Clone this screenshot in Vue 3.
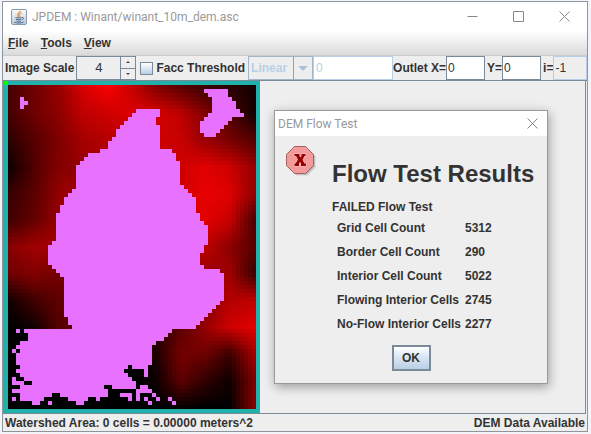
<script setup>
import { onMounted, ref } from 'vue'

const scale = ref('4')
const facc = ref(false)
const threshold = ref('0')
const outletX = ref('0')
const outletY = ref('0')
const outletI = ref('-1')

const stats = [
  ['Grid Cell Count', 5312],
  ['Border Cell Count', 290],
  ['Interior Cell Count', 5022],
  ['Flowing Interior Cells', 2745],
  ['No-Flow Interior Cells', 2277],
]

const COLS = 64
const ROWS = 83
const dem = ref(null)

// Coarse elevation samples, spread evenly over the grid and interpolated per cell.
const relief = [
  [70, 110, 150, 215, 250, 200, 130, 90, 60, 40, 20],
  [70, 110, 140, 190, 205, 220, 215, 190, 130, 80, 20],
  [45, 85, 125, 165, 180, 200, 205, 200, 155, 120, 85],
  [15, 80, 130, 150, 180, 200, 200, 205, 225, 205, 150],
  [55, 90, 145, 170, 180, 200, 200, 210, 232, 222, 150],
  [65, 100, 150, 170, 180, 200, 200, 210, 225, 200, 80],
  [135, 160, 165, 150, 150, 150, 150, 180, 190, 140, 90],
  [110, 130, 115, 110, 110, 110, 110, 130, 155, 160, 60],
  [20, 65, 95, 100, 100, 100, 100, 110, 130, 180, 190],
  [0, 15, 85, 100, 60, 30, 40, 90, 150, 205, 225],
  [0, 0, 0, 0, 0, 0, 30, 115, 110, 60, 160],
  [0, 0, 0, 0, 0, 0, 12, 95, 50, 15, 120],
  [0, 0, 0, 0, 0, 0, 0, 10, 0, 0, 130],
]

// Cells without flow: [first row, last row + 1, first column, last column + 1]
const noFlow = [
  [4, 7, 4, 5], [5, 6, 5, 6],
  [2, 3, 50, 56], [3, 4, 51, 56], [4, 5, 52, 57], [5, 7, 52, 58], [7, 8, 52, 59],
  [8, 9, 51, 60], [9, 10, 50, 57], [10, 11, 49, 56], [11, 12, 49, 55], [12, 13, 49, 54], [13, 14, 50, 53],
  [7, 8, 33, 39], [8, 9, 32, 39], [9, 10, 31, 38], [10, 11, 30, 38], [11, 12, 29, 39], [12, 14, 28, 39],
  [14, 15, 27, 39], [15, 17, 26, 39], [17, 18, 24, 42], [18, 19, 21, 43], [19, 20, 20, 43],
  [20, 21, 19, 44], [21, 26, 18, 44], [26, 27, 18, 45], [27, 28, 17, 46], [28, 29, 16, 47],
  [29, 31, 15, 48], [31, 33, 14, 48], [33, 35, 13, 49], [35, 36, 13, 50], [36, 40, 13, 51],
  [40, 41, 12, 51], [41, 43, 11, 50], [43, 46, 11, 49], [46, 47, 12, 50], [47, 48, 13, 54],
  [48, 49, 14, 55], [49, 55, 15, 55], [55, 56, 15, 54], [56, 57, 15, 53], [57, 58, 15, 52],
  [58, 59, 15, 51], [59, 60, 16, 50], [60, 61, 16, 49], [61, 62, 17, 48],
  [62, 63, 3, 4], [62, 63, 5, 42], [63, 64, 6, 41], [64, 65, 6, 40], [65, 66, 4, 38], [66, 67, 3, 37],
  [67, 68, 2, 3], [67, 68, 4, 37], [68, 71, 3, 37], [71, 72, 4, 31], [71, 72, 32, 36],
  [72, 73, 3, 30], [72, 74, 35, 36], [73, 74, 4, 31], [74, 75, 2, 3], [74, 75, 5, 32],
  [75, 76, 2, 5], [75, 76, 7, 33], [76, 77, 4, 25], [76, 77, 27, 33], [76, 77, 34, 36],
  [77, 78, 2, 26], [77, 78, 33, 37], [78, 79, 4, 12], [78, 79, 14, 26], [78, 79, 29, 32],
  [78, 80, 33, 34], [78, 79, 37, 38], [79, 80, 2, 3], [79, 80, 4, 10], [79, 80, 16, 21],
  [79, 80, 23, 24], [79, 80, 31, 32], [79, 80, 35, 36], [79, 80, 38, 39], [79, 80, 41, 42],
  [80, 81, 7, 9], [80, 81, 11, 12], [80, 81, 18, 20], [80, 81, 36, 37], [80, 81, 42, 43],
]

function intensity(col, row) {
  if (row >= 62 && col < 34) return 0
  const u = ((col - 1) / (COLS - 3)) * (relief[0].length - 1)
  const v = ((row - 1) / (ROWS - 3)) * (relief.length - 1)
  const c = Math.min(Math.floor(u), relief[0].length - 2)
  const r = Math.min(Math.floor(v), relief.length - 2)
  const fu = u - c
  const fv = v - r
  const top = relief[r][c] * (1 - fu) + relief[r][c + 1] * fu
  const bottom = relief[r + 1][c] * (1 - fu) + relief[r + 1][c + 1] * fu
  return Math.round(top * (1 - fv) + bottom * fv)
}

onMounted(() => {
  const ctx = dem.value.getContext('2d')
  ctx.fillStyle = '#20b2aa'
  ctx.fillRect(0, 0, COLS, ROWS)
  for (let row = 1; row < ROWS - 1; row++) {
    for (let col = 1; col < COLS - 1; col++) {
      ctx.fillStyle = `rgb(${intensity(col, row)}, 0, 0)`
      ctx.fillRect(col, row, 1, 1)
    }
  }
  ctx.fillStyle = '#e872ff'
  for (const [r0, r1, c0, c1] of noFlow) ctx.fillRect(c0, r0, c1 - c0, r1 - r0)
  ctx.fillStyle = '#00ff00'
  ctx.fillRect(0, 0, 1, 1)
})
</script>

<template>
  <div class="desktop">
    <main class="window">
      <header class="titlebar">
        <svg class="java" viewBox="0 0 16 16" aria-hidden="true">
          <defs>
            <linearGradient id="java-bg" x1="0" y1="0" x2="0" y2="1">
              <stop offset="0" stop-color="#fbfcfd" />
              <stop offset="1" stop-color="#b9c9d8" />
            </linearGradient>
          </defs>
          <rect x="0.5" y="0.5" width="15" height="15" rx="1.5" fill="url(#java-bg)" stroke="#8a9bad" />
          <path d="M9.2 1.8C9.8 3.6 5.8 4.4 6.8 6.2C7.1 6.8 7.5 7.3 7.6 8" fill="none" stroke="#e8862e" stroke-width="1.3" />
          <path d="M10.6 4.2C8.4 5 8 5.8 8.8 6.8C9.2 7.4 8.8 7.8 8.4 8.2" fill="none" stroke="#e8862e" stroke-width="1" />
          <path d="M4.4 8.8H10.6M5 10.6H10.2M10.8 8.6C13.4 8.2 13 10.2 10.8 10.8M5.6 12.2H9.8M3.4 13.2C5.4 14.4 10.6 14.2 12.6 13" fill="none" stroke="#4a6a92" stroke-width="1" />
        </svg>
        <h1 class="caption">JPDEM : Winant/winant_10m_dem.asc</h1>
        <div class="controls">
          <button type="button" aria-label="Minimize">
            <svg viewBox="0 0 11 11"><path d="M0.5 5.5H10.5" /></svg>
          </button>
          <button type="button" aria-label="Maximize">
            <svg viewBox="0 0 11 11"><path d="M0.5 0.5H10.5V10.5H0.5Z" /></svg>
          </button>
          <button type="button" aria-label="Close">
            <svg viewBox="0 0 11 11"><path d="M0.5 0.5L10.5 10.5M10.5 0.5L0.5 10.5" /></svg>
          </button>
        </div>
      </header>

      <nav class="menubar">
        <button type="button"><u>F</u>ile</button>
        <button type="button"><u>T</u>ools</button>
        <button type="button"><u>V</u>iew</button>
      </nav>

      <form class="toolbar" @submit.prevent>
        <label for="scale">Image Scale</label>
        <div class="spinner">
          <input id="scale" v-model="scale" type="text" />
          <div class="steps">
            <button type="button" aria-label="Increase"><svg viewBox="0 0 4 2"><path d="M0 2L2 0L4 2Z" /></svg></button>
            <button type="button" aria-label="Decrease"><svg viewBox="0 0 4 2"><path d="M0 0L2 2L4 0Z" /></svg></button>
          </div>
        </div>
        <input id="facc" v-model="facc" class="check" type="checkbox" />
        <label for="facc" class="facc">Facc Threshold</label>
        <div class="combo">
          <select aria-label="Threshold scale" disabled><option>Linear</option></select>
          <span class="arrow"><svg viewBox="0 0 10 5"><path d="M0 0H10L5 5Z" /></svg></span>
        </div>
        <input v-model="threshold" class="field threshold" type="text" aria-label="Threshold value" disabled />
        <label for="outx">Outlet X=</label>
        <input id="outx" v-model="outletX" class="field" type="text" />
        <label for="outy" class="next">Y=</label>
        <input id="outy" v-model="outletY" class="field" type="text" />
        <label for="outi" class="next">i=</label>
        <input id="outi" v-model="outletI" class="field index" type="text" readonly />
      </form>

      <section class="view">
        <canvas ref="dem" class="dem" :width="COLS" :height="ROWS"></canvas>
      </section>

      <footer class="status">
        <span>Watershed Area: 0 cells = 0.00000 meters^2</span>
        <span>DEM Data Available</span>
      </footer>
    </main>

    <section class="dialog" role="dialog" aria-labelledby="dialog-title">
      <header class="dialog-bar">
        <h2 id="dialog-title" class="caption">DEM Flow Test</h2>
        <button type="button" class="dialog-close" aria-label="Close">
          <svg viewBox="0 0 11 11"><path d="M0.5 0.5L10.5 10.5M10.5 0.5L0.5 10.5" /></svg>
        </button>
      </header>
      <div class="dialog-body">
        <svg class="error" viewBox="0 0 32 32" aria-hidden="true">
          <path d="M8.5 0.5H19.5L27.5 8.5V19.5L19.5 27.5H8.5L0.5 19.5V8.5Z" transform="translate(2 2)" fill="#000" opacity="0.12" />
          <path d="M8.5 0.5H19.5L27.5 8.5V19.5L19.5 27.5H8.5L0.5 19.5V8.5Z" transform="translate(1 1)" fill="#000" opacity="0.15" />
          <path d="M8.5 0.5H19.5L27.5 8.5V19.5L19.5 27.5H8.5L0.5 19.5V8.5Z" fill="#f39a9a" stroke="#a06060" />
          <path d="M8.5 8H13.5V10L14.5 11.4L15.5 10V8H19.5V10H18.5L16.5 13.7L18.5 17.5H20V20H15V17.5L14 15.8L13 17.5V20H8.5V17.5H9.5L12 13.8L10 10H8.5Z" fill="#960000" stroke="#ffd0d0" stroke-width="1" paint-order="stroke" />
        </svg>
        <div class="report">
          <h3>Flow Test Results</h3>
          <p>FAILED Flow Test</p>
          <table>
            <tbody>
              <tr v-for="[name, value] in stats" :key="name">
                <th scope="row">{{ name }}</th>
                <td>{{ value }}</td>
              </tr>
            </tbody>
          </table>
        </div>
      </div>
      <button type="button" class="ok">OK</button>
    </section>
  </div>
</template>

<style>
body {
  margin: 0;
  background: #f1f5fa;
}
</style>

<style scoped>
* {
  box-sizing: border-box;
}

.desktop {
  position: relative;
  display: flex;
  min-height: 100vh;
  padding: 1px 3px 2px 2px;
  font: bold 12px/16px "Liberation Sans", Arial, sans-serif;
  color: #333;
}

button,
input,
select {
  margin: 0;
  padding: 0;
  border: 0;
  border-radius: 0;
  background: none;
  font: inherit;
  color: inherit;
}

svg {
  display: block;
}

.window {
  flex: 1;
  min-width: 0;
  display: flex;
  flex-direction: column;
  border: 1px solid #8f959c;
  background: #eee;
}

.titlebar {
  display: flex;
  align-items: center;
  height: 29px;
  padding-left: 8px;
  background: #fff;
}

.java {
  width: 16px;
  height: 16px;
}

.caption {
  margin: 0;
  font: 12px/16px Roboto, "Open Sans", sans-serif;
  color: #999;
}

.titlebar .caption {
  flex: 1;
  padding-left: 5px;
}

.controls {
  display: flex;
}

.controls button {
  display: flex;
  justify-content: center;
  width: 46px;
}

.controls svg,
.dialog-close svg {
  width: 11px;
  height: 11px;
  fill: none;
  stroke: #888;
}

.menubar {
  display: flex;
  gap: 12px;
  height: 25px;
  padding: 0 5px;
  border-bottom: 1px solid #ccc;
  background: linear-gradient(#fff, #dadada);
}

.toolbar {
  display: flex;
  align-items: center;
  height: 25px;
  padding-left: 2px;
  border-bottom: 1px solid #7a8a99;
  white-space: nowrap;
}

.spinner {
  display: flex;
  width: 60px;
  height: 24px;
  margin-left: 2px;
}

.spinner input {
  flex: 1;
  min-width: 0;
  border: 1px solid #7a8a99;
  border-right: 0;
  text-align: center;
  font-weight: normal;
  font-size: 13px;
}

.steps {
  display: flex;
  flex-direction: column;
  width: 16px;
  border: 1px solid #7a8a99;
}

.steps button {
  flex: 1;
  display: flex;
  align-items: center;
  justify-content: center;
}

.steps button + button {
  border-top: 1px solid #7a8a99;
}

.steps svg {
  width: 4px;
  height: 2px;
  fill: #444;
}

.check {
  appearance: none;
  width: 13px;
  height: 13px;
  margin: 0 3px 0 4px;
  border: 1px solid #7a8a99;
  background: linear-gradient(#fff, #b8cfe5);
}

.facc {
  margin-right: 3px;
}

.combo {
  display: flex;
  width: 65px;
  height: 24px;
  border: 1px solid #a3b5c8;
}

.combo select {
  flex: 1;
  min-width: 0;
  appearance: none;
  padding-left: 2px;
  color: #b8cfe5;
  opacity: 1;
}

.arrow {
  display: flex;
  align-items: center;
  justify-content: center;
  width: 19px;
  border-left: 1px solid #8fa1b3;
}

.arrow svg {
  width: 10px;
  height: 5px;
  fill: #a9c3dd;
}

.field {
  width: 39px;
  height: 24px;
  padding-left: 1px;
  border: 1px solid #7a8a99;
  background: #fff;
  font-weight: normal;
}

.threshold {
  width: 80px;
  padding-left: 2px;
  border-color: #b8cfe5;
  color: #b8cfe5;
}

.next {
  margin-left: 2px;
}

.index {
  flex: 1;
  min-width: 0;
  border-color: #b8cfe5;
  background: #eee;
}

.view {
  flex: 1;
  display: flex;
  align-items: flex-start;
  margin-right: 1px;
  border-right: 1px solid #7a8a99;
  border-bottom: 1px solid #7a8a99;
  border-left: 1px solid #7a8a99;
}

.dem {
  width: 256px;
  height: 332px;
  image-rendering: pixelated;
}

.status {
  display: flex;
  align-items: center;
  justify-content: space-between;
  height: 17px;
  padding: 0 2px;
}

.dialog {
  position: absolute;
  top: 110px;
  left: 274px;
  width: 274px;
  display: flex;
  flex-direction: column;
  border: 1px solid #999;
  background: #eee;
  box-shadow: 1px 3px 10px rgba(0, 0, 0, 0.35);
}

.dialog-bar {
  display: flex;
  align-items: center;
  justify-content: space-between;
  height: 25px;
  padding: 0 9px 0 3px;
  background: #fff;
}

.dialog-body {
  display: flex;
  gap: 14px;
  padding: 10px 10px 0 11px;
}

.error {
  flex: none;
  width: 32px;
  height: 32px;
}

.report {
  padding-top: 12px;
  white-space: nowrap;
}

.report h3 {
  margin: 0;
  font-size: 24px;
  line-height: 32px;
}

.report p {
  margin: 9px 0 1px;
}

table {
  margin-left: 5px;
  border-collapse: collapse;
}

th,
td {
  height: 24px;
  padding: 0;
  text-align: left;
  font-weight: bold;
}

th {
  padding-right: 4px;
}

.ok {
  align-self: center;
  width: 39px;
  height: 26px;
  margin: 9px 0 12px;
  border: 2px solid #7a8a99;
  background: linear-gradient(#fff, #dde8f3 40%, #b8cfe5);
}
</style>
